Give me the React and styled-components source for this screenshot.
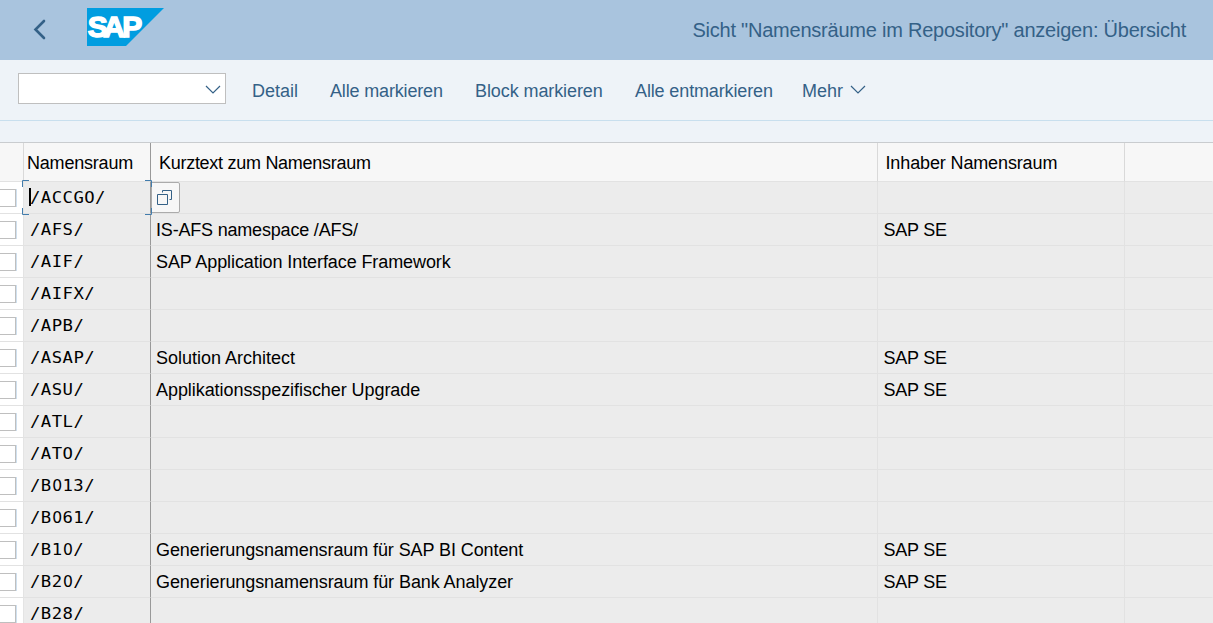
import React from "react";
import styled, { createGlobalStyle } from "styled-components";

const Global = createGlobalStyle`
  * { box-sizing: border-box; }
  html, body { margin: 0; height: 100%; overflow: hidden; }
  body { background: #eef3f8; font-family: "Liberation Sans", Arial, sans-serif; font-size: 18px; color: #000; }
`;

const Page = styled.div`
  width: 100%;
  height: 623px;
  overflow: hidden;
  display: flex;
  flex-direction: column;
`;

const TopBar = styled.header`
  flex: none;
  height: 60px;
  background: #a9c4de;
  display: flex;
  align-items: flex-start;
  padding: 8px 27px 0 33px;
`;

const BackIcon = styled.svg`
  width: 14px;
  height: 22px;
  margin-top: 10px;
`;

const Logo = styled.svg`
  width: 77px;
  height: 38px;
  margin-left: 40px;
`;

const Title = styled.h1`
  margin: 0 0 0 auto;
  padding-top: 10px;
  font-size: 20px;
  line-height: 24px;
  font-weight: 400;
  letter-spacing: -0.225px;
  color: #346187;
  white-space: nowrap;
`;

const Toolbar = styled.nav`
  flex: none;
  height: 61px;
  border-bottom: 1px solid #c8dfee;
  display: flex;
  align-items: flex-start;
  padding: 13px 18px 0;
`;

const Combo = styled.div`
  width: 208px;
  height: 31px;
  margin-right: 26px;
  padding: 1px 4px 0 0;
  border: 1px solid #bfbfbf;
  background: #fff;
  display: flex;
  align-items: center;
  justify-content: flex-end;
`;

const Chevron = styled.svg`
  width: 16px;
  height: 9px;
  fill: none;
  stroke: #346187;
  stroke-width: 1.2;
`;

const Action = styled.a`
  display: flex;
  padding-top: 6px;
  width: ${(p) => p.$w}px;
  line-height: 24px;
  color: #346187;
  white-space: nowrap;
  letter-spacing: ${(p) => p.$ls || 0}px;

  ${Chevron} { margin: 6px 0 0 7px; }
`;

const Spacer = styled.div`
  flex: none;
  height: 21px;
`;

const Grid = styled.div`
  flex: 1;
  min-height: 0;
  border-top: 1px solid #c9cccf;
`;

const Row = styled.div`
  display: grid;
  grid-template-columns: 24px 127px 727px 247px 1fr;
  height: 32px;
`;

const HeadRow = styled(Row)`
  height: 39px;
`;

const HeadCell = styled.div`
  background: #f7f7f7;
  border-right: 1px solid ${(p) => (p.$fixed ? "#999" : p.$last ? "transparent" : "#d9d9d9")};
  border-bottom: 1px solid #e2e2e2;
  padding: 9px 0 0 ${(p) => p.$pad || 0}px;
  line-height: 22px;
  white-space: nowrap;
  letter-spacing: ${(p) => p.$ls || 0}px;
`;

const Cell = styled.div`
  position: relative;
  background: #ececec;
  border-right: 1px solid ${(p) => (p.$fixed ? "#999" : p.$last ? "transparent" : "#e2e2e2")};
  border-bottom: 1px solid #e2e2e2;
  padding: 5px 0 0 ${(p) => p.$pad || 5}px;
  line-height: 22px;
  white-space: nowrap;
  letter-spacing: ${(p) => p.$ls || 0}px;
`;

const SelectCell = styled.div`
  background: #fff;
  border-right: 1px solid #e4e4e4;
  border-bottom: 1px solid #e2e2e2;
  padding-top: 7px;
`;

const CheckBox = styled.div`
  width: 16px;
  height: 18px;
  border: 1px solid #bfbfbf;
  border-left: 0;
  box-shadow: 1px 0 0 #cfe0ef;
`;

/* Stretched sideways for the broad proportions of a console face */
const Code = styled.span`
  display: block;
  padding-top: 1px;
  font-family: "DejaVu Sans Mono", monospace;
  font-size: 16px;
  letter-spacing: 0.4px;
  line-height: 20px;
  transform: scaleX(1.08);
  transform-origin: 0 0;
`;

/* Zero without the inner mark of the monospaced face */
const Zero = styled.span`
  font-family: "DejaVu Sans Condensed", "DejaVu Sans", sans-serif;
  font-stretch: condensed;
  display: inline-block;
  width: 10.03px;
  text-align: center;
  letter-spacing: 0;
`;

const Frame = styled.svg`
  position: absolute;
  left: -2px;
  top: -2px;
  width: 130px;
  height: 35px;
  z-index: 2;
  overflow: visible;
`;

const Caret = styled.i`
  position: absolute;
  left: 5px;
  top: 6px;
  width: 2px;
  height: 18px;
  background: #000;
`;

const HelpButton = styled.button`
  position: absolute;
  left: 0;
  top: 0;
  width: 29px;
  height: 31px;
  padding: 0 2px 0 0;
  border: 1px solid #ababab;
  border-radius: 0 2px 2px 0;
  background: #f7f7f7;
  display: flex;
  align-items: center;
  justify-content: center;
`;

const rows = [
  ["/ACCGO/", "", ""],
  ["/AFS/", "IS-AFS namespace /AFS/", "SAP SE", -0.19],
  ["/AIF/", "SAP Application Interface Framework", "", -0.09],
  ["/AIFX/", "", ""],
  ["/APB/", "", ""],
  ["/ASAP/", "Solution Architect", "SAP SE"],
  ["/ASU/", "Applikationsspezifischer Upgrade", "SAP SE", -0.06],
  ["/ATL/", "", ""],
  ["/ATO/", "", ""],
  ["/B013/", "", ""],
  ["/B061/", "", ""],
  ["/B10/", "Generierungsnamensraum für SAP BI Content", "SAP SE", -0.09],
  ["/B20/", "Generierungsnamensraum für Bank Analyzer", "SAP SE", -0.08],
  ["/B28/", "", ""],
];

const Down = () => (
  <Chevron viewBox="0 0 16 9">
    <path d="M1 1 L8 8 L15 1" />
  </Chevron>
);

function Namespace({ code }) {
  return (
    <Code>
      {code.split("").map((c, i) => (c === "0" ? <Zero key={i}>0</Zero> : c))}
    </Code>
  );
}

export default function App() {
  return (
    <Page>
      <Global />
      <TopBar>
        <BackIcon viewBox="0 0 14 22">
          <path d="M11 3 L2.5 11.5 L11 20" fill="none" stroke="#346187" strokeWidth="2.6" strokeLinecap="round" />
        </BackIcon>
        <Logo viewBox="0 0 77 38">
          <path d="M0 0H77L39 38H0Z" fill="#009de0" />
          <text
            x="0.8 16.3 35.2"
            y="29.3"
            fontFamily="Liberation Sans, Arial, sans-serif"
            fontWeight="700"
            fontSize="30"
            fill="#fff"
            stroke="#fff"
            strokeWidth="1.5"
          >
            SAP
          </text>
        </Logo>
        <Title>Sicht "Namensräume im Repository" anzeigen: Übersicht</Title>
      </TopBar>
      <Toolbar>
        <Combo><Down /></Combo>
        <Action $w={78}>Detail</Action>
        <Action $w={145} $ls={-0.16}>Alle markieren</Action>
        <Action $w={160} $ls={-0.09}>Block markieren</Action>
        <Action $w={167} $ls={-0.13}>Alle entmarkieren</Action>
        <Action $w={70}>Mehr<Down /></Action>
      </Toolbar>
      <Spacer />
      <Grid>
        <HeadRow>
          <HeadCell />
          <HeadCell $fixed $pad={3} $ls={-0.2}>Namensraum</HeadCell>
          <HeadCell $pad={8} $ls={-0.28}>Kurztext zum Namensraum</HeadCell>
          <HeadCell $pad={7.5} $ls={-0.13}>Inhaber Namensraum</HeadCell>
          <HeadCell $last />
        </HeadRow>
        {rows.map(([code, text, owner, spacing], i) => (
          <Row key={code}>
            <SelectCell><CheckBox /></SelectCell>
            <Cell $fixed $pad={6}>
              <Namespace code={code} />
              {i === 0 && (
                <>
                  <Caret />
                  <Frame viewBox="0 0 130 35" fill="none" stroke="#427cac">
                    <path d="M0.5 7V0.5H7M123 0.5H129.5V7M129.5 28V34.5H123M7 34.5H0.5V28" />
                  </Frame>
                </>
              )}
            </Cell>
            <Cell $ls={spacing}>
              {text}
              {i === 0 && (
                <HelpButton>
                  <svg width="15" height="15" viewBox="0 0 15 15" fill="none" stroke="#346187">
                    <path d="M0.5 4.5H10.5V14.5H0.5ZM5.5 2.5V0.5H14.5V9.5H12.5" />
                  </svg>
                </HelpButton>
              )}
            </Cell>
            <Cell $pad={5.5} $ls={-0.25}>{owner}</Cell>
            <Cell $last />
          </Row>
        ))}
      </Grid>
    </Page>
  );
}
